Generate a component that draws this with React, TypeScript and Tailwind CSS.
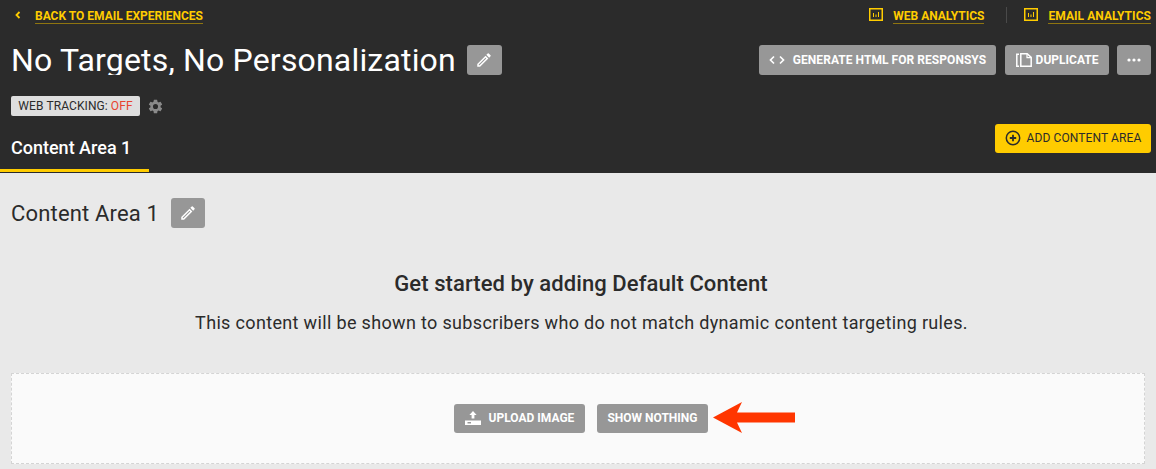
import React from "react";

const font = { fontFamily: "Roboto, sans-serif" };

const Pencil = ({ size = 18 }: { size?: number }) => (
  <svg width={size} height={size} viewBox="0 0 24 24" fill="white">
    <path d="M3 17.25V21h3.75L17.81 9.94l-3.75-3.75L3 17.25zM5.9 19H5v-.9l9.06-9.06.9.9L5.9 19zM20.71 7.04a1 1 0 0 0 0-1.41l-2.34-2.34a1 1 0 0 0-1.41 0l-1.83 1.83 3.75 3.75 1.83-1.83z" />
  </svg>
);

const Chart = () => (
  <svg width="14" height="13" viewBox="0 0 14 13" fill="none">
    <rect x="0.75" y="0.75" width="12.5" height="11.5" stroke="#ffcc00" strokeWidth="1.5" />
    <path d="M4 5v4h1V5zM6.5 6.5V9h1V6.5zM9 4v5h1V4z" fill="#ffcc00" />
  </svg>
);

const TopLink = ({ children }: { children: React.ReactNode }) => (
  <span className="border-b border-[#8f7510] text-[12px] leading-[15px] font-bold text-[#ffcc00]">{children}</span>
);

const GrayButton = ({ children, className }: { children: React.ReactNode; className: string }) => (
  <div className={`flex items-center justify-center rounded-[3px] bg-[#979797] text-[12px] font-bold text-white ${className}`}>
    {children}
  </div>
);

export default function App() {
  return (
    <div className="h-[469px] w-[1156px] overflow-hidden bg-[#e9e9e9] text-[#2b2b2b]" style={font}>
      <div className="h-[173px] bg-[#2b2b2b]">
        <div className="flex h-[29px] items-center justify-between pr-[5px] pl-[15px]">
          <div className="flex items-center">
            <svg width="6" height="8" viewBox="0 0 6 8" fill="none">
              <path d="M4.5 1 1.5 4l3 3" stroke="#ffcc00" strokeWidth="1.8" />
            </svg>
            <span className="ml-[14px]"><TopLink>BACK TO EMAIL EXPERIENCES</TopLink></span>
          </div>
          <div className="flex items-center">
            <Chart />
            <span className="ml-[10px]"><TopLink>WEB ANALYTICS</TopLink></span>
            <div className="mr-[17px] ml-[22px] h-4 w-px bg-[#4a4a4a]" />
            <Chart />
            <span className="ml-[10px] tracking-[0.05px]"><TopLink>EMAIL ANALYTICS</TopLink></span>
          </div>
        </div>

        <div className="mt-[16px] flex h-[30px] items-center justify-between pr-[5px] pl-[11px]">
          <div className="flex items-center">
            <span className="h-[30px] overflow-hidden text-[32px] leading-[30px] tracking-[0.18px] text-white">No Targets, No Personalization</span>
            <GrayButton className="ml-[11px] h-[30px] w-[35px]"><Pencil /></GrayButton>
          </div>
          <div className="flex items-center">
            <GrayButton className="h-[30px] w-[237px] tracking-[0.05px]">
              <svg width="16" height="10" viewBox="0 0 16 10" fill="none" stroke="white" strokeWidth="1.7">
                <path d="M5 1.5 1.5 5 5 8.5M11 1.5 14.5 5 11 8.5" />
              </svg>
              <span className="ml-[8px]">GENERATE HTML FOR RESPONSYS</span>
            </GrayButton>
            <GrayButton className="ml-[9px] h-[30px] w-[104px]">
              <svg width="16" height="14" viewBox="0 0 16 14" fill="none" stroke="white" strokeWidth="1.5">
                <path d="M3 1.2H.8v12H3" />
                <path d="M4.8.8h6.4l4 3.6v8.8H4.8z" />
                <path d="M11 1v3.6h4" strokeWidth="1.2" />
              </svg>
              <span className="ml-1">DUPLICATE</span>
            </GrayButton>
            <GrayButton className="ml-2 h-[30px] w-[34px]">
              <svg width="14" height="4" viewBox="0 0 14 4" fill="white">
                <circle cx="2" cy="2" r="1.6" /><circle cx="7" cy="2" r="1.6" /><circle cx="12" cy="2" r="1.6" />
              </svg>
            </GrayButton>
          </div>
        </div>

        <div className="mt-[21px] flex items-center pl-[11px]">
          <div className="flex h-5 w-[129px] items-center justify-center rounded-[2px] bg-[#dedede] text-[12px] tracking-[0.1px] text-[#2b2b2b]">
            WEB TRACKING:<span className="ml-[3px] text-[#e8432e]">OFF</span>
          </div>
          <svg className="ml-[7px]" width="17" height="17" viewBox="0 0 24 24" fill="#8a8a8a">
            <path d="M19.14 12.94c.04-.31.06-.62.06-.94s-.02-.63-.07-.94l2.03-1.58a.5.5 0 0 0 .12-.64l-1.92-3.32a.5.5 0 0 0-.59-.22l-2.39.96a7 7 0 0 0-1.62-.94l-.36-2.54a.48.48 0 0 0-.48-.41h-3.84a.48.48 0 0 0-.47.41l-.36 2.54c-.59.24-1.13.56-1.62.94l-2.39-.96a.49.49 0 0 0-.59.22L2.74 8.84a.48.48 0 0 0 .12.64l2.03 1.58c-.05.31-.09.63-.09.94s.02.63.07.94l-2.03 1.58a.5.5 0 0 0-.12.64l1.92 3.32c.12.22.37.29.59.22l2.39-.96c.5.38 1.03.7 1.62.94l.36 2.54c.05.24.24.41.48.41h3.84c.24 0 .44-.17.47-.41l.36-2.54c.59-.24 1.13-.56 1.62-.94l2.39.96c.22.08.47 0 .59-.22l1.92-3.32a.48.48 0 0 0-.12-.64l-2.01-1.58zM12 15.6A3.6 3.6 0 1 1 12 8.4a3.6 3.6 0 0 1 0 7.2z" />
          </svg>
        </div>

        <div className="mt-[7px] flex items-start justify-between pr-[5px]">
          <div className="flex h-[49px] w-[149px] items-start border-b-[3px] border-[#ffcc00] pt-[15px] pl-[11px] text-[18px] leading-5 font-medium whitespace-nowrap text-white">
            Content Area 1
          </div>
          <div className="mt-[1px] flex h-[29px] w-[156px] items-center justify-center rounded-[3px] bg-[#ffcc00] pb-px text-[12px] tracking-[0.1px] text-[#2b2b2b]">
            <svg width="16" height="16" viewBox="0 0 16 16" fill="none" stroke="#2b2b2b">
              <circle cx="8" cy="8" r="6.7" strokeWidth="1.5" />
              <path d="M8 4.8v6.4M4.8 8h6.4" strokeWidth="1.8" />
            </svg>
            <span className="ml-[6px]">ADD CONTENT AREA</span>
          </div>
        </div>
      </div>

      <div className="px-[11px]">
        <div className="mt-[25px] flex h-[30px] items-center">
          <span className="text-[22px] tracking-[0.17px]">Content Area 1</span>
          <GrayButton className="ml-3 h-[30px] w-[34px]"><Pencil /></GrayButton>
        </div>

        <div className="mt-[44px] pl-[6px] text-center text-[22px] leading-6 font-medium tracking-[0.08px]">Get started by adding Default Content</div>
        <div className="mt-[15px] pl-[7px] text-center text-[18px] leading-6 tracking-[0.34px]">
          This content will be shown to subscribers who do not match dynamic content targeting rules.
        </div>

        <div className="relative mt-[38px] flex h-[91px] items-center justify-center border border-dashed border-[#d4d4d4] bg-[#fafafa] pb-px pl-[6px]">
          <GrayButton className="h-[29px] w-[131px]">
            <svg width="16" height="15" viewBox="0 0 16 15" fill="white">
              <path d="M8 0l3.6 4H9.4v3.5H6.6V4H4.4z" />
              <path fillRule="evenodd" d="M0 9.5h16V14H0zM2.5 11v1.5H6V11z" />
            </svg>
            <span className="ml-[8px]">UPLOAD IMAGE</span>
          </GrayButton>
          <GrayButton className="ml-3 h-[29px] w-[111px]">SHOW NOTHING</GrayButton>
          <svg className="absolute top-[28px] left-[701px]" width="83" height="31" viewBox="0 0 83 31" fill="#ff3600">
            <path d="M0 15.5 29 0 24 10.5H82V20.5H24L29 31z" />
          </svg>
        </div>
      </div>
    </div>
  );
}
